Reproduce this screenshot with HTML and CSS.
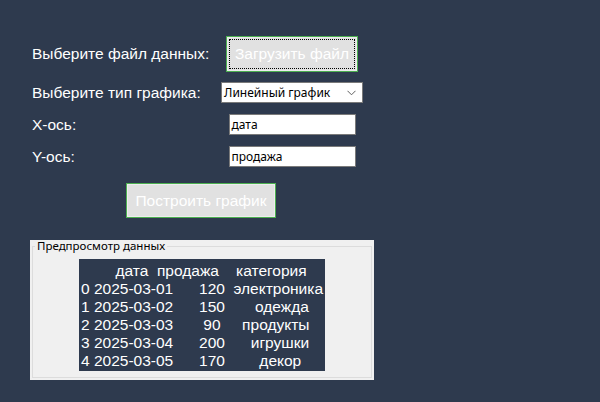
FILE: index.html
```html
<!DOCTYPE html>
<html lang="ru">
<head>
<meta charset="utf-8">
<title>Построение графика</title>
<link rel="stylesheet" href="styles.css">
</head>
<body>
<div class="app">
  <div class="row row-file">
    <div class="label">Выберите файл данных:</div>
    <div class="ctl"><button class="btn btn-load"><span class="focus">Загрузить файл</span></button></div>
  </div>
  <div class="row row-type">
    <div class="label">Выберите тип графика:</div>
    <div class="ctl">
      <div class="combo">
        <span class="combo-text">Линейный график</span>
        <svg class="chev" width="9" height="6" viewBox="0 0 9 6"><path d="M0.5 0.8 L4.5 4.8 L8.5 0.8" fill="none" stroke="#606060" stroke-width="1"/></svg>
      </div>
    </div>
  </div>
  <div class="row row-x">
    <div class="label">X-ось:</div>
    <div class="ctl"><div class="entry">дата</div></div>
  </div>
  <div class="row row-y">
    <div class="label">Y-ось:</div>
    <div class="ctl"><div class="entry">продажа</div></div>
  </div>
  <div class="row row-build">
    <button class="btn btn-build">Построить график</button>
  </div>
  <div class="preview">
    <fieldset class="group">
      <legend class="group-title">Предпросмотр данных</legend>
      <div class="table">        дата  продажа    категория
0 2025-03-01      120  электроника
1 2025-03-02      150       одежда
2 2025-03-03       90     продукты
3 2025-03-04      200      игрушки
4 2025-03-05      170        декор</div>
    </fieldset>
  </div>
</div>
</body>
</html>
```
FILE: styles.css
```css
html, body {
  margin: 0;
  padding: 0;
  background: #2e3a4e;
  width: 600px;
  height: 402px;
  overflow: hidden;
}
.app {
  padding: 36px 0 0 30px;
  font-family: "Liberation Sans", Arial, sans-serif;
  color: #ffffff;
}
.row {
  display: flex;
  align-items: center;
}
.label {
  width: 191px;
  padding-left: 2px;
  box-sizing: border-box;
  font-size: 15.5px;
  line-height: 18px;
  color: #ffffff;
}
.ctl {
  width: 142px;
  display: flex;
  justify-content: center;
}
.row-file { height: 36px; }
.row-type { height: 21px; margin-top: 10px; }
.row-x { height: 21px; margin-top: 11px; }
.row-y { height: 21px; margin-top: 11px; }
.row-build { height: 35px; margin-top: 16px; }

.btn {
  box-sizing: border-box;
  background: #e1e1e1;
  border: 1px solid #4caf50;
  box-shadow: inset 0 0 0 1px #ededed;
  color: #ffffff;
  font-family: "Liberation Sans", Arial, sans-serif;
  font-size: 15.5px;
  padding: 0;
  margin: 0;
  display: flex;
  align-items: center;
  justify-content: center;
}
.btn-load {
  width: 132px;
  height: 36px;
}
.focus {
  box-sizing: border-box;
  width: 126px;
  height: 30px;
  border: 1px dotted #000000;
  display: flex;
  align-items: center;
  justify-content: center;
}
.btn-build {
  width: 150px;
  height: 35px;
  margin-left: 96px;
}

.combo {
  box-sizing: border-box;
  width: 142px;
  height: 21px;
  background: #ffffff;
  border: 1px solid #7a7a7a;
  display: flex;
  align-items: center;
  justify-content: space-between;
  padding: 0 6px 0 2px;
  font-family: "Noto Sans", sans-serif;
  font-size: 12px;
  color: #000000;
}
.chev { display: block; }
.entry {
  box-sizing: border-box;
  width: 127px;
  height: 21px;
  background: #ffffff;
  border: 1px solid #7a7a7a;
  padding: 0 2px;
  display: flex;
  align-items: center;
  font-family: "Noto Sans", sans-serif;
  font-size: 12px;
  color: #000000;
}

.preview {
  margin-top: 22px;
  width: 344px;
  height: 140px;
  box-sizing: border-box;
  background: #f0f0f0;
  padding: 0 2px 2px 2px;
}
.group {
  margin: 0;
  box-sizing: border-box;
  height: 138px;
  border: 1px solid #dcdcdc;
  padding: 7px 0 0 0;
  display: flex;
  flex-direction: column;
  align-items: center;
}
.group-title {
  margin-left: 2px;
  padding: 0 2px;
  font-family: "Noto Sans", sans-serif;
  font-size: 11.5px;
  line-height: 12px;
  color: #000000;
}
.table {
  background: #2e3a4e;
  color: #ffffff;
  white-space: pre;
  font-family: "Liberation Sans", Arial, sans-serif;
  font-size: 15.5px;
  line-height: 18px;
  padding: 3px 2px 1px 2px;
}
```
